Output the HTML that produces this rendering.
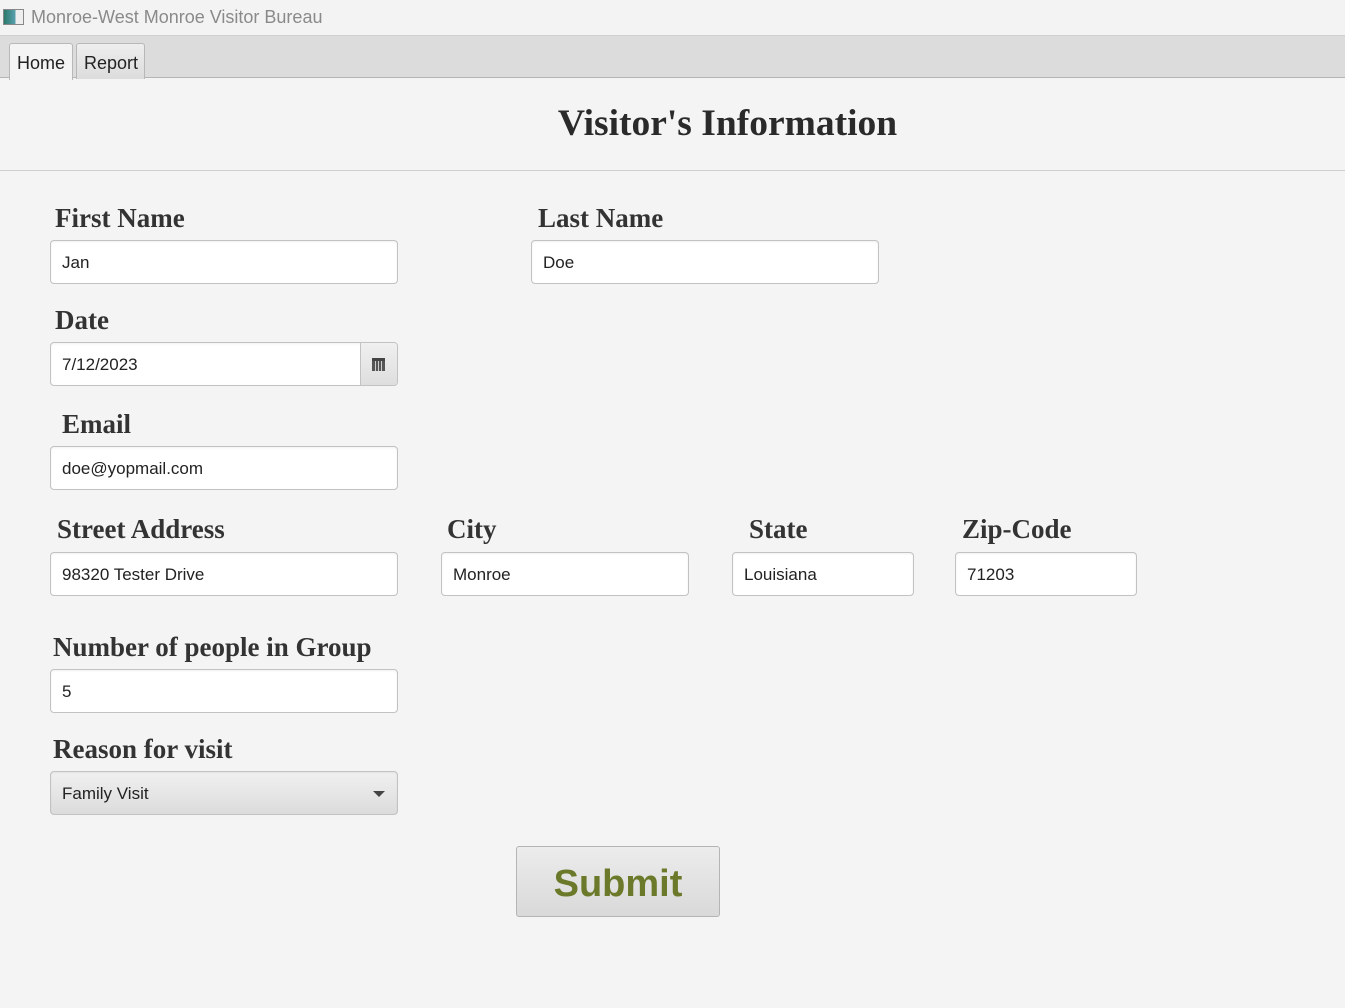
<!DOCTYPE html>
<html><head><meta charset="utf-8"><style>
*{margin:0;padding:0;box-sizing:border-box}
body{width:1345px;height:1008px;background:#f4f4f4;position:relative;overflow:hidden;font-family:"Liberation Sans",sans-serif}
.abs{position:absolute}
.title{left:0;top:0;width:1345px;height:35px;background:#f3f3f3}
.tabs{left:0;top:35px;width:1345px;height:43px;background:#dcdcdc;border-top:1px solid #d0d0d0;border-bottom:1px solid #b5b5b5}
.tab{top:7px;height:36px;border:1px solid #b8b8b8;border-bottom:none;border-radius:3px 3px 0 0;font-size:18px;color:#222;padding:9px 7px 0;background:linear-gradient(#eeeeee,#dcdcdc)}
.lbl{font-family:"Liberation Serif",serif;font-weight:bold;font-size:27px;color:#333}
.in{height:44px;background:#fff;border:1px solid #c2c2c2;border-radius:4px;font-size:17px;color:#222;padding:12px 0 0 11px;box-shadow:inset 0 1px 2px rgba(0,0,0,.06)}
</style></head><body>
<div class="abs title"></div>
<div class="abs" style="left:3px;top:9px;width:21px;height:16px;border:1px solid #888;background:linear-gradient(90deg,#2b7a6a,#5aa0b0 60%,#eee 60%)"></div>
<div class="abs" style="left:31px;top:7px;font-size:18px;color:#8a8a8a">Monroe-West Monroe Visitor Bureau</div>
<div class="abs tabs">
 <div class="abs tab" style="left:9px;width:64px;background:#f4f4f4;height:37px">Home</div>
 <div class="abs tab" style="left:76px;width:69px">Report</div>
</div>
<div class="abs" style="left:0;top:102px;width:1455px;text-align:center;font-family:'Liberation Serif',serif;font-weight:bold;font-size:37.5px;color:#2a2a2a">Visitor's Information</div>
<div class="abs" style="left:0;top:170px;width:1345px;height:1px;background:#cfcfcf"></div>

<div class="abs lbl" style="left:55px;top:203px">First Name</div>
<div class="abs in" style="left:50px;top:240px;width:348px">Jan</div>
<div class="abs lbl" style="left:538px;top:203px">Last Name</div>
<div class="abs in" style="left:531px;top:240px;width:348px">Doe</div>

<div class="abs lbl" style="left:55px;top:305px">Date</div>
<div class="abs in" style="left:50px;top:342px;width:348px">7/12/2023</div>
<div class="abs" style="left:360px;top:343px;width:37px;height:42px;border-left:1px solid #c2c2c2;background:linear-gradient(#f0f0f0,#dedede);border-radius:0 3px 3px 0"></div>
<div class="abs" style="left:372px;top:358px;width:13px;height:13px;background:#555;border-top:3px solid #444;background-image:linear-gradient(90deg,transparent 3px,#ccc 3px,#ccc 4px,transparent 4px,transparent 6px,#ccc 6px,#ccc 7px,transparent 7px,transparent 9px,#ccc 9px,#ccc 10px,transparent 10px)"></div>

<div class="abs lbl" style="left:62px;top:409px">Email</div>
<div class="abs in" style="left:50px;top:446px;width:348px">doe@yopmail.com</div>

<div class="abs lbl" style="left:57px;top:514px">Street Address</div>
<div class="abs in" style="left:50px;top:552px;width:348px">98320 Tester Drive</div>
<div class="abs lbl" style="left:447px;top:514px">City</div>
<div class="abs in" style="left:441px;top:552px;width:248px">Monroe</div>
<div class="abs lbl" style="left:749px;top:514px">State</div>
<div class="abs in" style="left:732px;top:552px;width:182px">Louisiana</div>
<div class="abs lbl" style="left:962px;top:514px">Zip-Code</div>
<div class="abs in" style="left:955px;top:552px;width:182px">71203</div>

<div class="abs lbl" style="left:53px;top:632px">Number of people in Group</div>
<div class="abs in" style="left:50px;top:669px;width:348px">5</div>

<div class="abs lbl" style="left:53px;top:734px">Reason for visit</div>
<div class="abs in" style="left:50px;top:771px;width:348px;background:linear-gradient(#f0f0f0,#dcdcdc)">Family Visit</div>
<div class="abs" style="left:373px;top:791px;width:0;height:0;border-left:6px solid transparent;border-right:6px solid transparent;border-top:6px solid #444"></div>

<div class="abs" style="left:516px;top:846px;width:204px;height:71px;border:1px solid #b5b5b5;border-radius:3px;background:linear-gradient(#ececec,#d9d9d9);text-align:center;font-weight:bold;font-size:38px;color:#6b7a2a;padding-top:16px">Submit</div>
</body></html>
